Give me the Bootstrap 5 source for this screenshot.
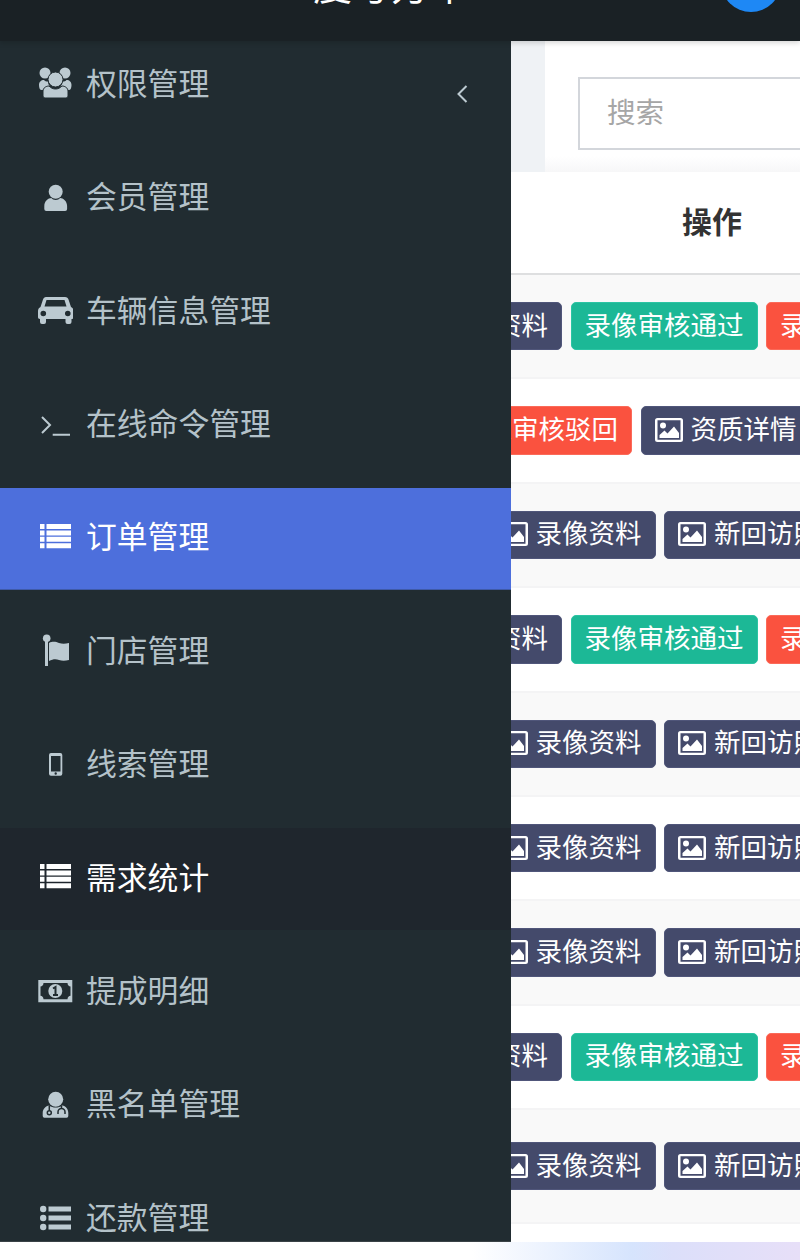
<!DOCTYPE html>
<html lang="zh-CN">
<head>
<meta charset="utf-8">
<title>订单管理</title>
<link href="https://cdn.jsdelivr.net/npm/bootstrap@5.3.0/dist/css/bootstrap.min.css" rel="stylesheet">
<style>
html,body{height:1260px;overflow:hidden;background:#fff;}
body{font-family:"Liberation Sans","Noto Sans CJK SC",sans-serif;position:relative;}
.topbar{height:41px;background:#1a2125;box-shadow:0 2px 5px rgba(0,0,0,.16);position:relative;z-index:3;}
.topbar-title{color:#fff;font-size:39px;line-height:48px;margin-left:313px;margin-bottom:30px;white-space:nowrap;}
.topbar-avatar{width:60px;height:60px;flex:none;border-radius:50%;background:#1e88f5;margin-left:auto;margin-right:19px;margin-bottom:29px;}
.filter-zone{height:133px;flex:none;}
.filter-gutter{width:545px;background:#eff2f5;margin-bottom:2px;flex:none;}
.filter-panel{background:linear-gradient(#fff 88%,#f7f7f8);padding:36px 0 0 33px;margin-bottom:2px;}
.search-box{width:400px;height:73px;border:2px solid #d3d6db;border-radius:0;font-size:28.5px;padding:0 0 0 27px;color:#333;box-shadow:none;}
.search-box::placeholder{color:#a6a6a6;}
.data-wrap{height:1068px;flex:none;}
.data-table{table-layout:fixed;width:800px;--bs-table-striped-bg:#f9f9f9;--bs-table-border-color:#f4f4f5;--bs-table-bg:#fff;--bs-table-striped-color:#333;}
.data-table th{height:100px;padding:0 0 3px 682px;font-size:30px;font-weight:700;color:#333;vertical-align:middle;border-bottom:2px solid #dedfe0;}
.data-table td{height:104.4px;padding:0;vertical-align:middle;border-bottom-width:2px;}
.data-table tr.tall-row td{height:114px;}
.data-table td.lead-a{padding-left:392px;}
.data-table td.lead-b{padding-left:445px;}
.data-table td.lead-c{padding-left:485.5px;}
.act-btn{--bs-btn-padding-x:13px;--bs-btn-padding-y:0;--bs-btn-font-size:26.5px;--bs-btn-border-radius:5px;--bs-btn-color:#fff;--bs-btn-hover-color:#fff;height:48.4px;line-height:46px;padding-bottom:1px;flex:none;white-space:nowrap;display:inline-flex;align-items:center;gap:8px;}
.act-navy{--bs-btn-bg:#444a6b;--bs-btn-border-color:#50567a;--bs-btn-hover-bg:#444a6b;--bs-btn-hover-border-color:#50567a;}
.act-green{--bs-btn-bg:#1cb896;--bs-btn-border-color:#2bc4a3;--bs-btn-hover-bg:#1cb896;--bs-btn-hover-border-color:#2bc4a3;}
.act-red{--bs-btn-bg:#fa523f;--bs-btn-border-color:#fb6a59;--bs-btn-hover-bg:#fa523f;--bs-btn-hover-border-color:#fb6a59;}
.act-row{gap:8.5px;}
.foot-strip{height:18px;flex:none;background:linear-gradient(90deg,#fff 59%,#d6e4fd 79%,#dcdffa 84%,#e7dff8 100%);}
.side-menu{position:absolute;left:0;top:41px;width:511px;height:1201px;background:#212c31;overflow:hidden;z-index:2;border-bottom:1px solid #3a4246;}
.side-list{margin-top:-6.6px;gap:11.4px;}
.side-link{height:102px;padding:0 0 1px 37px;color:#b4c2c9;font-size:30.8px;display:flex;align-items:center;gap:13px;text-decoration:none;flex:none;}
.side-link svg{flex:none;margin-top:-3px;}
.side-link.is-active{background:#4d6fdc;color:#fff;box-shadow:inset 0 -1px 0 #3f5aa8;}
.side-link.is-hover{background:#1f262d;color:#fff;}
.side-link svg.side-caret{margin-left:auto;margin-right:43px;margin-top:19px;}
</style>
</head>
<body class="d-flex flex-column">
<header class="topbar d-flex align-items-end overflow-hidden flex-none">
  <span class="topbar-title">度号方单</span>
  <span class="topbar-avatar"></span>
</header>

<aside class="side-menu">
  <nav class="side-list nav flex-column flex-nowrap">
    <a class="side-link" href="#">
      <svg width="36" height="36" viewBox="0 0 36 36" fill="#bccad1"><circle cx="8" cy="8" r="5.500"/><circle cx="28" cy="8" r="5.500"/><path d="M2 20c0-3 2-5 5-5 1 1 2 1.500 4 1.500 0 2 1 4 2 5-3 .5-5 2-6 3.500H4.500C3 25 2 23 2 20z"/><path d="M34.500 20c0-3-2-5-5-5-1 1-2 1.500-4 1.500 0 2-1 4-2 5 3 .5 5 2 6 3.500H32c1.500 0 2.500-2 2.500-5z"/><circle cx="18.500" cy="14.500" r="7.500" stroke="#212c31" stroke-width="1"/><path stroke="#212c31" stroke-width="1" d="M6 26c0-3 3-5 6-5 2 2 4 3 6.500 3s4.500-1 6.500-3c3 0 6 2 6 5v5a2 2 0 0 1-2 2H8a2 2 0 0 1-2-2z"/></svg>
      权限管理
      <svg class="side-caret" width="11" height="18" viewBox="0 0 11 18" fill="none" stroke="#bccad1" stroke-width="2"><path d="M9.500 1 1.500 9l8 8"/></svg>
    </a>
    <a class="side-link" href="#">
      <svg width="36" height="36" viewBox="0 0 36 36" fill="#bccad1"><circle cx="18.700" cy="12.700" r="7"/><path d="M7.300 27c0-5 4-8 7-8 1 1 2.500 2 4.400 2s3.400-1 4.400-2c3 0 7 3 7 8v3a2 2 0 0 1-2 2H9.300a2 2 0 0 1-2-2z"/></svg>
      会员管理
    </a>
    <a class="side-link" href="#">
      <svg width="36" height="36" viewBox="0 0 36 36" fill="#bccad1" fill-rule="evenodd"><path d="M9 5h19c2 0 3 1 3.500 2.500L34 15c1.500.8 2.500 2 2.500 4v6c0 1-.5 2-2 2v3a2 2 0 0 1-2 2h-2a2 2 0 0 1-2-2v-3H9v3a2 2 0 0 1-2 2H5a2 2 0 0 1-2-2v-3c-1.500 0-2-1-2-2v-6c0-2 1-3.200 2.500-4L6 7.500C6.500 6 7.500 5 9 5zM9.500 8l-2 6.500h22L27.500 8zM3.500 21.500a2.800 2.800 0 1 0 5.600 0 2.800 2.800 0 1 0-5.600 0zM28 21.500a2.800 2.800 0 1 0 5.600 0 2.800 2.800 0 1 0-5.600 0z"/></svg>
      车辆信息管理
    </a>
    <a class="side-link" href="#">
      <svg width="36" height="36" viewBox="0 0 36 36" fill="none" stroke="#bccad1" stroke-width="2"><path d="M5 11l8 8-8 8M15.700 28.800h17.300"/></svg>
      在线命令管理
    </a>
    <a class="side-link is-active" href="#">
      <svg width="36" height="36" viewBox="0 0 36 36" fill="#fff"><path d="M3 5h4.500v5H3zM9.500 5H34v5H9.500zM3 11.400h4.500v5H3zM9.500 11.400H34v5H9.500zM3 17.800h4.500v5H3zM9.500 17.800H34v5H9.500zM3 24.200h4.500v5H3zM9.500 24.200H34v5H9.500z"/></svg>
      订单管理
    </a>
    <a class="side-link" href="#">
      <svg width="36" height="36" viewBox="0 0 36 36" fill="#bccad1"><circle cx="9.700" cy="6.300" r="3.800"/><path d="M8 7h3v27H8z"/><path d="M12 11c4-2 7-1 10 0s6 1 10 0v17c-4 1-7 1-10 0s-6-1-10 1z"/></svg>
      门店管理
    </a>
    <a class="side-link" href="#">
      <svg width="36" height="36" viewBox="0 0 36 36" fill="#bccad1" fill-rule="evenodd"><path d="M14 7h9.300a2 2 0 0 1 2 2v18.700a2 2 0 0 1-2 2H14a2 2 0 0 1-2-2V9a2 2 0 0 1 2-2zM14 10v15.500h9.500V10zM18.700 26.300a1.200 1.200 0 1 0 0 2.400 1.200 1.200 0 1 0 0-2.400z"/></svg>
      线索管理
    </a>
    <a class="side-link is-hover" href="#">
      <svg width="36" height="36" viewBox="0 0 36 36" fill="#fff"><path d="M3 5h4.500v5H3zM9.500 5H34v5H9.500zM3 11.400h4.500v5H3zM9.500 11.400H34v5H9.500zM3 17.800h4.500v5H3zM9.500 17.800H34v5H9.500zM3 24.200h4.500v5H3zM9.500 24.200H34v5H9.500z"/></svg>
      需求统计
    </a>
    <a class="side-link" href="#">
      <svg width="36" height="36" viewBox="0 0 36 36"><path fill="#bccad1" fill-rule="evenodd" d="M1.300 7h34v22.300h-34zM6.500 10c0 2-1.500 3.500-3 3.500v9.300c1.500 0 3 1.500 3 3.500h24c0-2 1.500-3.500 3-3.500v-9.300c-1.500 0-3-1.500-3-3.500z"/><circle cx="18.300" cy="18" r="7" fill="#bccad1"/><path fill="none" stroke="#212c31" stroke-width="2" d="M16 15.500l2.500-1.500v8M16 22h5"/></svg>
      提成明细
    </a>
    <a class="side-link" href="#">
      <svg width="36" height="36" viewBox="0 0 36 36"><circle cx="18.700" cy="13.300" r="7.500" fill="#bccad1"/><path fill="#bccad1" d="M5.700 27c0-4 3-7 6.500-7.500 2 1.500 4 2 6.500 2s4.500-.5 6.500-2c3.500.5 6.100 3.500 6.100 7.500v3a1.700 1.700 0 0 1-1.700 1.700H7.400A1.700 1.700 0 0 1 5.700 30z"/><path fill="none" stroke="#212c31" stroke-width="1.500" d="M12.300 19.500v5M24.500 20v2.500M21 28v-2a3.500 3.500 0 0 1 7 0v2"/><circle cx="12.300" cy="26.700" r="2" fill="none" stroke="#212c31" stroke-width="1.500"/></svg>
      黑名单管理
    </a>
    <a class="side-link" href="#">
      <svg width="36" height="36" viewBox="0 0 36 36" fill="#bccad1"><circle cx="6.200" cy="10" r="3.200"/><circle cx="6.200" cy="19" r="3.200"/><circle cx="6.200" cy="28" r="3.200"/><path d="M11.500 7.500H34v5H11.500zM11.500 16.500H34v5H11.500zM11.500 25.500H34v5H11.500z"/></svg>
      还款管理
    </a>
  </nav>
</aside>

<section class="filter-zone d-flex">
  <div class="filter-gutter"></div>
  <div class="filter-panel flex-grow-1 overflow-hidden">
    <input class="form-control search-box" type="text" placeholder="搜索">
  </div>
</section>

<section class="data-wrap overflow-hidden">
  <table class="table table-striped mb-0 data-table">
    <thead><tr><th>操作</th></tr></thead>
    <tbody id="rows"></tbody>
  </table>
</section>
<div class="foot-strip"></div>

<script>
const pic='<svg width="28" height="24" viewBox="0 0 28 24" fill="#fff"><path fill-rule="evenodd" d="M2.500 0h23A2.500 2.500 0 0 1 28 2.500v19a2.500 2.500 0 0 1-2.500 2.500h-23A2.500 2.500 0 0 1 0 21.500v-19A2.500 2.500 0 0 1 2.500 0zM2.500 2.200v19.600h23V2.200z"/><circle cx="8" cy="7.500" r="3"/><path d="M4.500 20v-3l5-4.500 3 3 6.500-7 5 6.500V20z"/></svg>';
const navy=(t)=>`<a class="btn act-btn act-navy" href="#">${pic}${t}</a>`;
const green='<a class="btn act-btn act-green" href="#">录像审核通过</a>';
const red='<a class="btn act-btn act-red" href="#">录像审核驳回</a>';
const A=['lead-a',navy('录像资料')+green+red];
const B=['lead-b',red+navy('资质详情')];
const C=['lead-c',navy('录像资料')+navy('新回访照片')];
const data=[A,B,C,A,C,C,C,A,C];
let html='';
data.forEach((r,i)=>{html+=`<tr class="${i===8?'tall-row':''}"><td class="${r[0]}"><div class="d-flex align-items-center act-row">${r[1]}</div></td></tr>`;});
html+='<tr><td></td></tr>';
document.getElementById('rows').innerHTML=html;
</script>
<script src="https://cdn.jsdelivr.net/npm/bootstrap@5.3.0/dist/js/bootstrap.bundle.min.js"></script>
</body>
</html>
